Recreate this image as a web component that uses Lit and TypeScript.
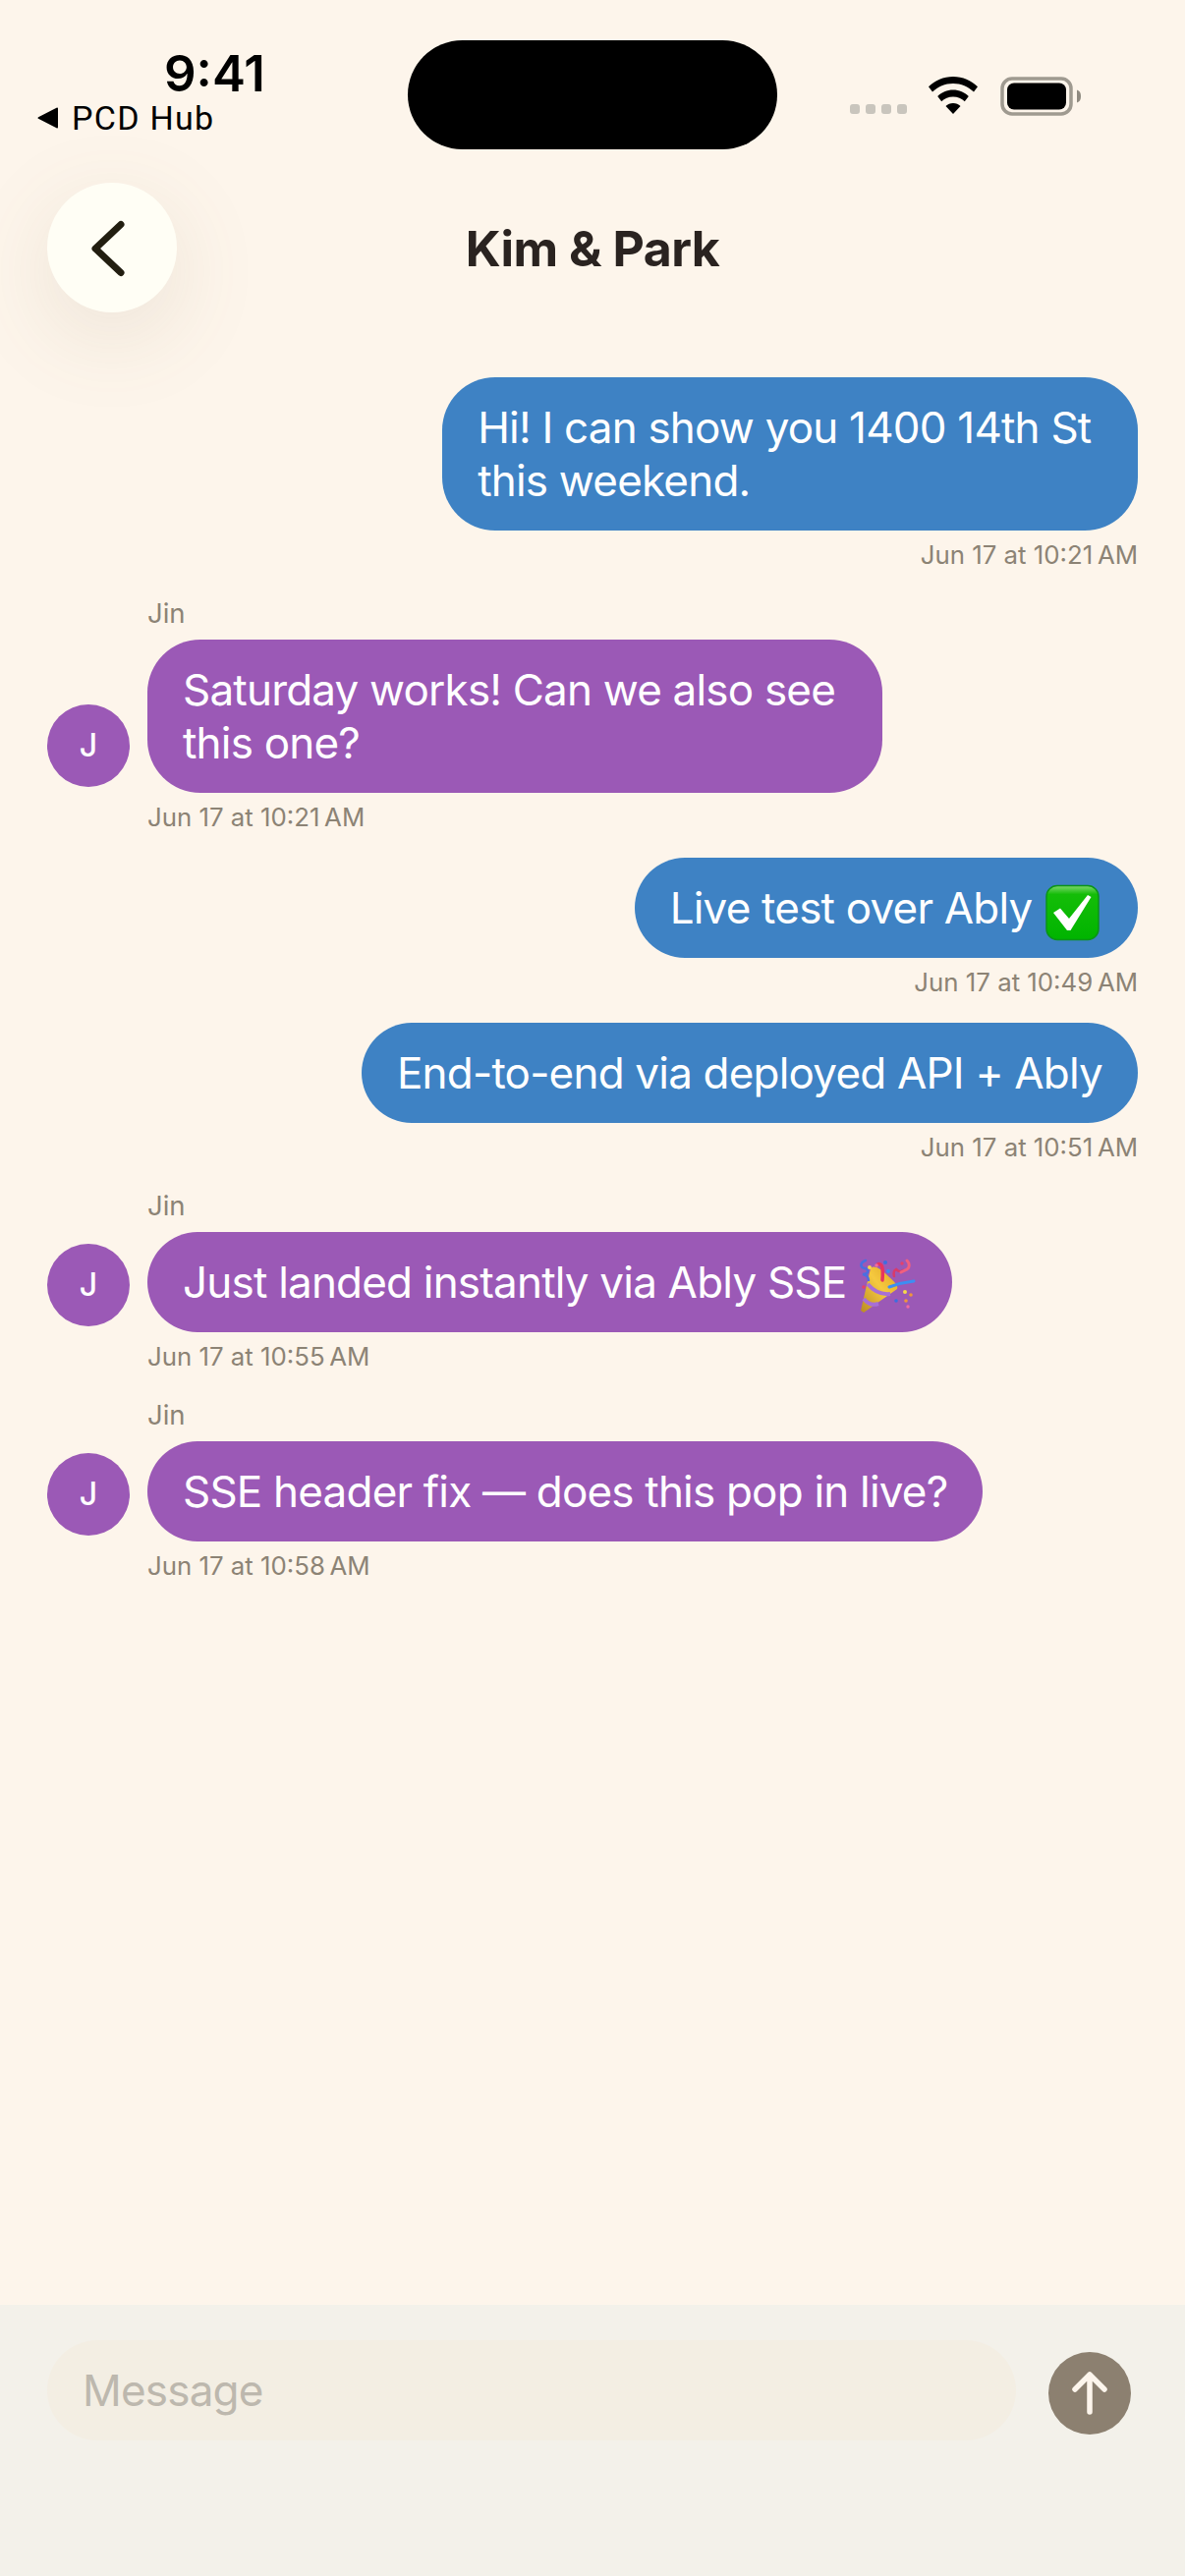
import { LitElement, html, css } from 'lit';
import { customElement } from 'lit/decorators.js';

type Msg = { mine: boolean; text: string; time: string; emoji?: 'check' | 'party' };

// the first line of a wrapped message keeps its trailing space, as in the bubble width of the design
const messages: Msg[] = [
  { mine: true, text: 'Hi! I can show you 1400 14th St \nthis weekend.', time: 'Jun 17 at 10:21\u202fAM' },
  { mine: false, text: 'Saturday works! Can we also see \nthis one?', time: 'Jun 17 at 10:21\u202fAM' },
  { mine: true, text: 'Live test over Ably ', time: 'Jun 17 at 10:49\u202fAM', emoji: 'check' },
  { mine: true, text: 'End-to-end via deployed API + Ably', time: 'Jun 17 at 10:51\u202fAM' },
  { mine: false, text: 'Just landed instantly via Ably SSE ', time: 'Jun 17 at 10:55\u202fAM', emoji: 'party' },
  { mine: false, text: 'SSE header fix \u2014 does this pop in live?', time: 'Jun 17 at 10:58\u202fAM' },
];

const checkEmoji = html`<svg class="emoji" viewBox="0 0 60 60">
  <defs>
    <linearGradient id="chk" x1="0" y1="0" x2="0" y2="1">
      <stop offset="0" stop-color="#7fd86e" />
      <stop offset="0.16" stop-color="#14bd08" />
      <stop offset="1" stop-color="#00b400" />
    </linearGradient>
  </defs>
  <rect x="3" y="3.500" width="53" height="55" rx="11" fill="url(#chk)" stroke="#0b9418" stroke-width="1.500" />
  <path d="M10 31l7-4.500 9 10.500 19-24 3.500 2-21 34h-3.500z" fill="#fff" />
</svg>`;

const partyEmoji = html`<svg class="emoji" viewBox="0 0 60 60">
  <defs>
    <linearGradient id="cone" x1="0" y1="1" x2="1" y2="0">
      <stop offset="0" stop-color="#b98a24" />
      <stop offset="0.55" stop-color="#f5c93f" />
      <stop offset="1" stop-color="#e0a420" />
    </linearGradient>
  </defs>
  <path d="M3 55L13 12c3-4 10 0 16 6s13 11 11 15L6 57z" fill="url(#cone)" />
  <path d="M10 28c6 7 14 11 23 10M6 43c4 5 9 7 15 5" fill="none" stroke="#a76fd6" stroke-width="4" />
  <g fill="none" stroke-linecap="round">
    <path d="M8 4C2 6 2 11 7 12s4 6-2 6c4 1 6 3 6 6" stroke="#4a6fe0" stroke-width="2.500" />
    <path d="M20 8c5-2 6 4 5 16" stroke="#e8345f" stroke-width="3.500" />
    <path d="M37 20c-1-4 0-6 2-7 2 2 5 3 7 1" stroke="#d93a6a" stroke-width="2.500" />
    <path d="M50 4c3 3 3 7 0 9l-6 3" stroke="#f0607f" stroke-width="3" />
    <path d="M32 31c8-3 16-5 25-6" stroke="#3d8ef2" stroke-width="3" />
  </g>
  <circle cx="12" cy="11" r="2" fill="#f6d94a" />
  <circle cx="19" cy="9" r="1.800" fill="#f06ba0" />
  <circle cx="28" cy="6" r="2" fill="#3a6fe0" />
  <circle cx="31" cy="15" r="2" fill="#3a8df0" />
  <circle cx="45" cy="7" r="1.700" fill="#e6406a" />
  <circle cx="6" cy="31" r="1.800" fill="#e6406a" />
  <circle cx="48" cy="36" r="2" fill="#f6d94a" />
  <circle cx="54" cy="39" r="1.800" fill="#f0963a" />
  <circle cx="49" cy="45" r="1.800" fill="#f0963a" />
  <circle cx="39" cy="45" r="1.800" fill="#3a6fe0" />
  <circle cx="51" cy="51" r="1.700" fill="#f06ba0" />
</svg>`;

@customElement('app-root')
export class AppRoot extends LitElement {
  static styles = css`
    :host {
      display: flex;
      flex-direction: column;
      width: 1206px;
      height: 2622px;
      background: #fdf5eb;
      font-family: Inter, 'Liberation Sans', sans-serif;
      overflow: hidden;
    }
    .status {
      display: flex;
      height: 186px;
      flex: none;
    }
    .status-left {
      width: 415px;
      flex: none;
      padding: 45px 0 0 38px;
      box-sizing: border-box;
      color: #000;
    }
    .clock {
      font-size: 51px;
      line-height: 60px;
      font-weight: 600;
      margin-left: 129px;
    }
    .back-app {
      display: flex;
      align-items: center;
      gap: 13px;
      font-family: Roboto, sans-serif;
      font-size: 34px;
      line-height: 40px;
      letter-spacing: 1.300px;
      margin-top: -5px;
    }
    .back-app svg {
      width: 22px;
      height: 22px;
    }
    .notch {
      width: 376px;
      height: 111px;
      margin-top: 41px;
      border-radius: 56px;
      background: #000;
      flex: none;
    }
    .status-right {
      display: flex;
      align-items: flex-start;
      padding: 78px 0 0 74px;
    }
    .dots {
      display: flex;
      gap: 6px;
      margin-top: 28px;
    }
    .dots i {
      width: 10px;
      height: 10px;
      border-radius: 3px;
      background: #c9c5bd;
    }
    .wifi {
      width: 50px;
      height: 38px;
      margin-left: 22px;
    }
    .battery {
      width: 84px;
      height: 40px;
      margin-left: 23px;
    }
    .header {
      display: grid;
      grid-template-columns: 132px 1fr 132px;
      align-items: center;
      padding: 0 48px;
      height: 132px;
      flex: none;
    }
    .back {
      width: 132px;
      height: 132px;
      border-radius: 50%;
      background: #fffef5;
      box-shadow: 0 24px 90px rgba(120, 105, 75, 0.13);
    }
    .back svg {
      display: block;
      width: 132px;
      height: 132px;
    }
    .title {
      text-align: center;
      font-size: 50px;
      line-height: 60px;
      font-weight: 700;
      color: #2a2320;
      letter-spacing: -0.5px;
      padding-top: 2px;
    }
    .thread {
      flex: 1;
      display: flex;
      flex-direction: column;
      gap: 24px;
      padding: 66px 48px 0;
    }
    .msg {
      display: flex;
      flex-direction: column;
    }
    .msg.mine {
      align-items: flex-end;
    }
    .sender {
      font-size: 27.500px;
      line-height: 36px;
      color: #8c8375;
      margin: 0 0 9px 102px;
    }
    .row {
      display: flex;
      align-items: flex-end;
      gap: 18px;
    }
    .avatar {
      width: 84px;
      height: 84px;
      box-sizing: border-box;
      padding-bottom: 2px;
      border-radius: 50%;
      background: #9b59b6;
      color: #fff;
      font-size: 32px;
      font-weight: 500;
      display: flex;
      align-items: center;
      justify-content: center;
      margin-bottom: 6px;
      flex: none;
    }
    .bubble {
      padding: 24px 36px;
      border-radius: 54px;
      color: #fff;
      font-size: 44px;
      font-weight: 380;
      letter-spacing: -0.800px;
      line-height: 54px;
      white-space: pre;
      background: #9b59b6;
    }
    .mine .bubble {
      background: #3e82c4;
    }
    .emoji {
      display: inline-block;
      width: 60px;
      height: 60px;
      margin: -10px 0;
      vertical-align: middle;
    }
    .time {
      font-size: 25.800px;
      line-height: 36px;
      margin-top: 7px;
      margin-bottom: -1px;
      color: #8c8375;
    }
    .msg:not(.mine) .time {
      margin-left: 102px;
    }
    .composer {
      height: 276px;
      flex: none;
      box-sizing: border-box;
      background: #f3f1ea;
      padding: 36px 55px 0 48px;
      display: flex;
      align-items: flex-start;
      gap: 33px;
    }
    .input {
      flex: 1;
      height: 102px;
      border-radius: 51px;
      background: #f3eee3;
      box-sizing: border-box;
      padding: 0 36px;
      display: flex;
      align-items: center;
      font-size: 44px;
      font-weight: 380;
      letter-spacing: -0.800px;
      color: #bdb8ae;
    }
    .send {
      width: 84px;
      height: 84px;
      margin-top: 12px;
      border-radius: 50%;
      background: #8c8070;
      flex: none;
    }
    .send svg {
      display: block;
      width: 84px;
      height: 84px;
    }
  `;

  private renderMessage(m: Msg) {
    const bubble = html`<div class="bubble">${m.text}${m.emoji === 'check' ? checkEmoji : m.emoji === 'party' ? partyEmoji : ''}</div>`;
    if (m.mine) {
      return html`<div class="msg mine">${bubble}<div class="time">${m.time}</div></div>`;
    }
    return html`<div class="msg">
      <div class="sender">Jin</div>
      <div class="row"><div class="avatar">J</div>${bubble}</div>
      <div class="time">${m.time}</div>
    </div>`;
  }

  render() {
    return html`
      <div class="status">
        <div class="status-left">
          <div class="clock">9:41</div>
          <div class="back-app">
            <svg viewBox="0 0 22 22"><path d="M21 1.500v19a1 1 0 0 1-1.500.8L1 11.800a1 1 0 0 1 0-1.600L19.500.7A1 1 0 0 1 21 1.500z" /></svg>
            <span>PCD Hub</span>
          </div>
        </div>
        <div class="notch"></div>
        <div class="status-right">
          <div class="dots"><i></i><i></i><i></i><i></i></div>
          <svg class="wifi" viewBox="0 0 50 38">
            <path d="M25 0c9.800 0 18.400 3.900 25 10.300l-4 5.300C40.500 10.200 33.200 7 25 7S9.500 10.200 4 15.600l-4-5.300C6.600 3.900 15.200 0 25 0z" />
            <path d="M25 13.500c6.200 0 11.700 2.500 15.800 6.500l-4 5.200C33.700 22.200 29.600 20.400 25 20.400s-8.700 1.800-11.800 4.800l-4-5.200c4.100-4 9.600-6.500 15.800-6.500z" />
            <path d="M25 27c3 0 5.500 1.100 7.500 3L25 38l-7.500-8c2-1.900 4.500-3 7.500-3z" />
          </svg>
          <svg class="battery" viewBox="0 0 84 40">
            <rect x="2" y="2" width="70" height="36" rx="10" fill="none" stroke="#9f9a90" stroke-width="3.500" />
            <rect x="7" y="6.500" width="60" height="27" rx="7" fill="#000" />
            <path d="M78 13.500c3 .8 4 3.300 4 6.500s-1 5.700-4 6.500z" fill="#8f8a80" />
          </svg>
        </div>
      </div>
      <div class="header">
        <div class="back">
          <svg viewBox="0 0 132 132">
            <path d="M75 42.500L49 67l26 24.500" fill="none" stroke="#221e10" stroke-width="7" stroke-linecap="round" stroke-linejoin="round" />
          </svg>
        </div>
        <div class="title">Kim &amp; Park</div>
        <div></div>
      </div>
      <div class="thread">${messages.map((m) => this.renderMessage(m))}</div>
      <div class="composer">
        <div class="input">Message</div>
        <div class="send">
          <svg viewBox="0 0 84 84">
            <path d="M42 61V23M27 38l15-15 15 15" fill="none" stroke="#fdf5ec" stroke-width="5.500" stroke-linecap="round" stroke-linejoin="round" />
          </svg>
        </div>
      </div>
    `;
  }
}
